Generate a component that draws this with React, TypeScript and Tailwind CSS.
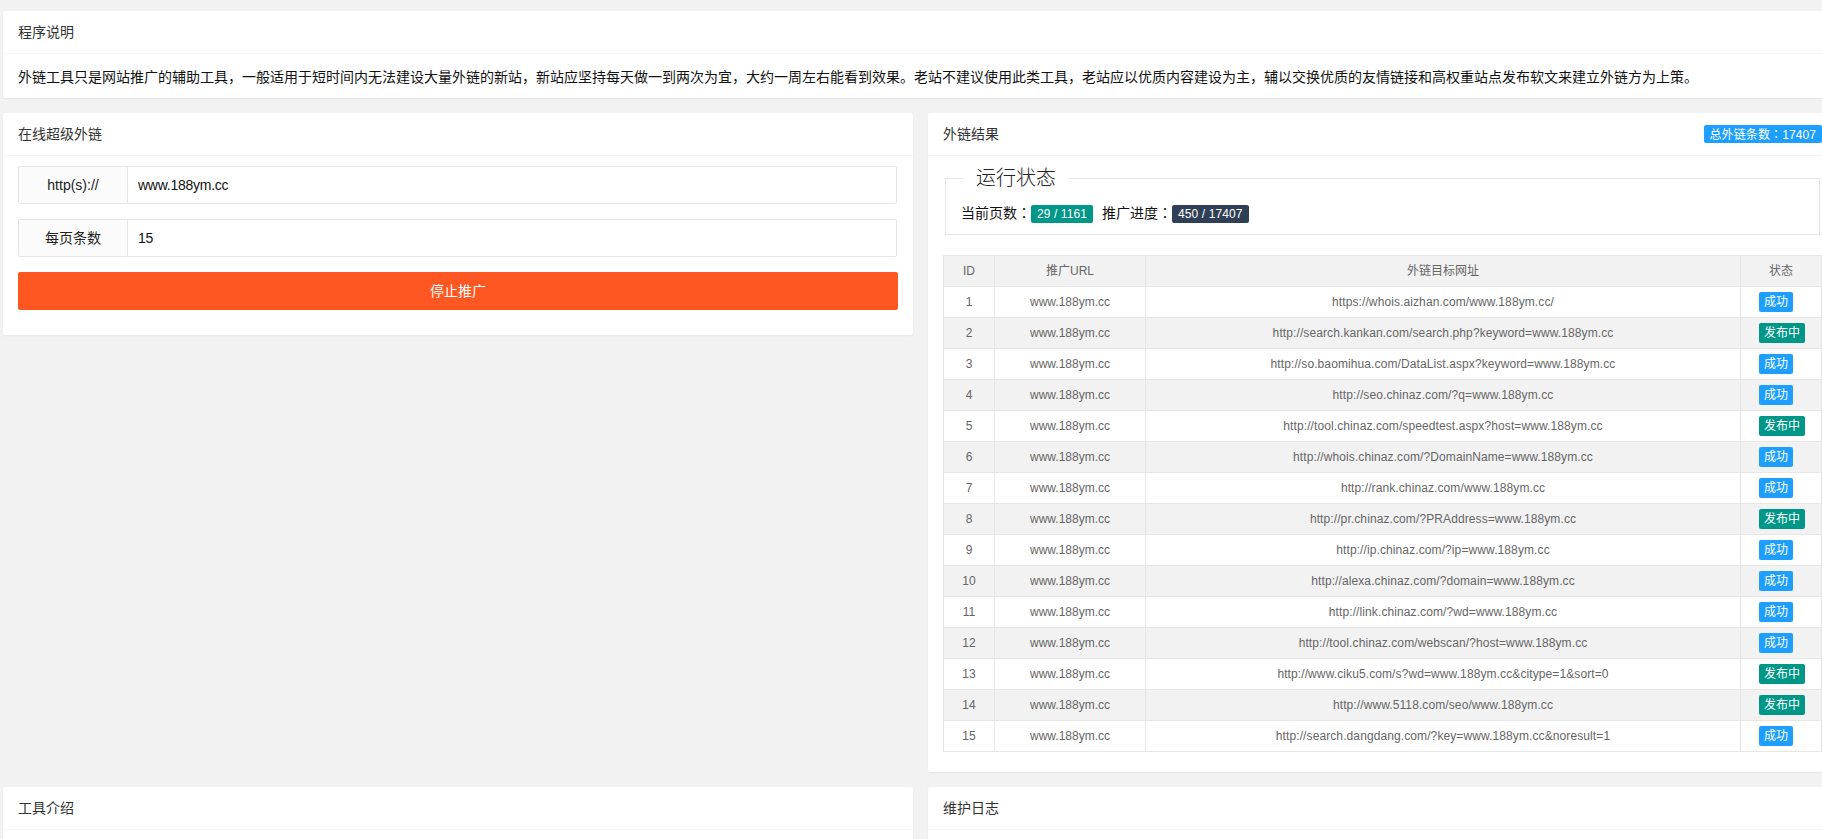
const rows: [string, boolean][] = [
  ["https://whois.aizhan.com/www.188ym.cc/", true],
  ["http://search.kankan.com/search.php?keyword=www.188ym.cc", false],
  ["http://so.baomihua.com/DataList.aspx?keyword=www.188ym.cc", true],
  ["http://seo.chinaz.com/?q=www.188ym.cc", true],
  ["http://tool.chinaz.com/speedtest.aspx?host=www.188ym.cc", false],
  ["http://whois.chinaz.com/?DomainName=www.188ym.cc", true],
  ["http://rank.chinaz.com/www.188ym.cc", true],
  ["http://pr.chinaz.com/?PRAddress=www.188ym.cc", false],
  ["http://ip.chinaz.com/?ip=www.188ym.cc", true],
  ["http://alexa.chinaz.com/?domain=www.188ym.cc", true],
  ["http://link.chinaz.com/?wd=www.188ym.cc", true],
  ["http://tool.chinaz.com/webscan/?host=www.188ym.cc", true],
  ["http://www.ciku5.com/s?wd=www.188ym.cc&citype=1&sort=0", false],
  ["http://www.5118.com/seo/www.188ym.cc", false],
  ["http://search.dangdang.com/?key=www.188ym.cc&noresult=1", true],
];

// Full-width comma and colon sit centred in their cell in the reference, as the Korean face draws them.
function Zh({ text }: { text: string }) {
  return (
    <>
      {text.split(/([，：])/).map((part, i) =>
        part === "，" || part === "：" ? (
          <span key={i} className="font-['Noto_Sans_CJK_KR',sans-serif]">{part}</span>
        ) : (
          part
        )
      )}
    </>
  );
}

function Card({ title, badge, children }: { title: string; badge?: string; children?: React.ReactNode }) {
  return (
    <div className="bg-white shadow-[0_1px_2px_0_rgba(0,0,0,0.05)] rounded-[2px]">
      <div className="h-[43px] leading-[42px] px-[15px] border-b border-[#f6f6f6] text-[#333] flex justify-between items-center">
        <span>{title}</span>
        {badge && (
          <span className="h-[18px] leading-[18px] px-[6px] rounded-[2px] bg-[#1E9FFF] text-white text-[12px] tracking-[0.1px]">
            <Zh text={badge} />
          </span>
        )}
      </div>
      {children}
    </div>
  );
}

function Field({ label, value }: { label: string; value: string }) {
  return (
    <div className="flex h-[38px] mb-[15px] mr-[1px]">
      <label className="w-[110px] shrink-0 border border-[#e6e6e6] rounded-l-[2px] bg-[#fbfbfb] text-center leading-[36px] text-[#222]">
        {label}
      </label>
      <input
        readOnly
        value={value}
        className="flex-1 min-w-0 border border-l-0 border-[#e6e6e6] rounded-r-[2px] px-[10px] text-[14px] tracking-[-0.25px] text-[#111] outline-none bg-white"
      />
    </div>
  );
}

export default function App() {
  return (
    <div className="h-screen overflow-hidden bg-[#f2f2f2] text-[14px] text-[#666] font-['Liberation_Sans','Noto_Sans_CJK_SC',sans-serif]">
      <div className="w-[1834px] ml-[3px] pt-[11px] flex flex-col gap-[15px]">
        <Card title="程序说明">
          <div className="h-[44px] px-[15px] py-[10px] leading-[24px] text-[#111]">
            <Zh text="外链工具只是网站推广的辅助工具，一般适用于短时间内无法建设大量外链的新站，新站应坚持每天做一到两次为宜，大约一周左右能看到效果。老站不建议使用此类工具，老站应以优质内容建设为主，辅以交换优质的友情链接和高权重站点发布软文来建立外链方为上策。" />
          </div>
        </Card>
        <div className="grid grid-cols-[910px_909px] gap-x-[15px] gap-y-[15px] items-start">
          <Card title="在线超级外链">
            <div className="px-[15px] py-[10px]">
              <Field label="http(s)://" value="www.188ym.cc" />
              <Field label="每页条数" value="15" />
              <button className="block w-full h-[38px] mb-[15px] rounded-[2px] bg-[#FF5722] text-white text-[14px] text-center">
                停止推广
              </button>
            </div>
          </Card>
          <Card title="外链结果" badge="总外链条数：17407">
            <div className="px-[15px] py-[10px]">
              <fieldset className="border border-[#e6e6e6] mx-[2px] mb-[10px]">
                <legend className="ml-[18px] px-[12px] text-[20px] leading-[24px] font-light text-[#222]">运行状态</legend>
                <div className="h-[44px] px-[15px] py-[10px] leading-[24px] text-[#111]">
                  <Zh text="当前页数：" />
                  <span className="inline-block align-middle h-[18px] leading-[18px] px-[6px] rounded-[2px] bg-[#009688] text-white text-[12px] tracking-[0.1px]">29 / 1161</span>
                  <span className="ml-[9px]"><Zh text="推广进度：" /></span>
                  <span className="inline-block align-middle h-[18px] leading-[18px] px-[6px] rounded-[2px] bg-[#2F4056] text-white text-[12px] tracking-[0.1px]">450 / 17407</span>
                </div>
              </fieldset>
              <table className="w-full table-fixed border-collapse mt-[20px] mb-[10px] text-[12px] text-center text-[#666]">
                <colgroup>
                  <col className="w-[51px]" />
                  <col className="w-[151px]" />
                  <col />
                  <col className="w-[81px]" />
                </colgroup>
                <thead>
                  <tr className="bg-[#f2f2f2] h-[31px]">
                    <th className="border border-[#e6e6e6] font-normal">ID</th>
                    <th className="border border-[#e6e6e6] font-normal">推广URL</th>
                    <th className="border border-[#e6e6e6] font-normal">外链目标网址</th>
                    <th className="border border-[#e6e6e6] font-normal">状态</th>
                  </tr>
                </thead>
                <tbody>
                  {rows.map(([url, ok], i) => (
                    <tr key={i} className={`h-[31px] ${i % 2 === 1 ? "bg-[#f2f2f2]" : "bg-white"}`}>
                      <td className="border border-[#e6e6e6]">{i + 1}</td>
                      <td className="border border-[#e6e6e6]">www.188ym.cc</td>
                      <td className="border border-[#e6e6e6] tracking-[0.1px]">{url}</td>
                      <td className="border border-[#e6e6e6] text-left pl-[18px]">
                        <span className={`block w-fit h-[20px] leading-[20px] px-[5px] rounded-[2px] text-white ${ok ? "bg-[#1E9FFF]" : "bg-[#009688]"}`}>
                          {ok ? "成功" : "发布中"}
                        </span>
                      </td>
                    </tr>
                  ))}
                </tbody>
              </table>
            </div>
          </Card>
          <Card title="工具介绍">
            <div className="h-[60px]" />
          </Card>
          <Card title="维护日志">
            <div className="h-[60px]" />
          </Card>
        </div>
      </div>
    </div>
  );
}
